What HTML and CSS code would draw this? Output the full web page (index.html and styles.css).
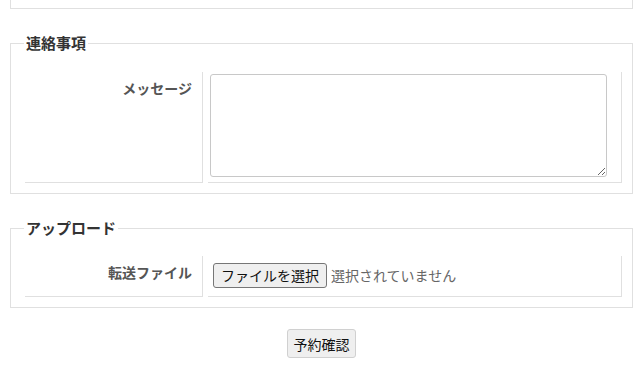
FILE: index.html
```html
<!DOCTYPE html>
<html lang="ja">
<head>
  <meta charset="UTF-8" />
  <meta name="viewport" content="width=device-width, initial-scale=1.0" />
  <title>予約フォーム</title>
  <link rel="stylesheet" href="styles.css">
</head>
<body>
  <form class="reserve-form">
    <fieldset class="box box-prev"></fieldset>

    <fieldset class="box">
      <legend>連絡事項</legend>
      <div class="row">
        <div class="label">メッセージ</div>
        <div class="value">
          <textarea name="message"></textarea>
        </div>
      </div>
    </fieldset>

    <fieldset class="box box-upload">
      <legend>アップロード</legend>
      <div class="row">
        <div class="label">転送ファイル</div>
        <div class="value value-file">
          <input type="file" id="upload" class="file-input">
          <label for="upload" class="file-btn">ファイルを選択</label>
          <span class="file-name">選択されていません</span>
        </div>
      </div>
    </fieldset>

    <div class="actions">
      <button type="submit" class="btn">予約確認</button>
    </div>
  </form>
</body>
</html>
```

FILE: styles.css
```css
* {
  box-sizing: border-box;
}

body {
  margin: 0 8px 8px;
  font-family: "Noto Sans CJK JP", "Noto Sans", sans-serif;
  color: #333;
  background: #fff;
}

.box {
  margin: 24px 2px 0;
  padding: 19px 10px 10px 14px;
  border: 1px solid #e0e0e0;
  min-width: 0;
}

.box-prev {
  margin-top: 0;
  height: 9px;
  padding: 0;
  border-top: none;
}

.box-upload {
  padding-top: 18px;
}

legend {
  padding: 0 2px;
  margin-left: -1px;
  font-size: 15px;
  line-height: 20px;
  font-weight: bold;
  color: #333;
}

.row {
  display: grid;
  grid-template-columns: 178px 1fr;
  column-gap: 5px;
}

.label {
  padding: 8px 10px 0 0;
  text-align: right;
  font-size: 14px;
  line-height: 16px;
  font-weight: bold;
  color: #555;
  border-right: 1px solid #e0e0e0;
  border-bottom: 1px solid #e0e0e0;
}

.value {
  padding: 2px 0 5px 2px;
  border-right: 1px solid #e0e0e0;
  border-bottom: 1px solid #e0e0e0;
}

textarea {
  display: block;
  width: 397px;
  height: 103px;
  margin: 0;
  border: 1px solid #c8c8c8;
  border-radius: 3px;
  font-family: inherit;
  font-size: 14px;
}

.value-file {
  display: flex;
  align-items: center;
  padding: 7px 0 8px 5px;
}

.file-input {
  display: none;
}

.file-btn {
  display: inline-block;
  width: 114px;
  height: 25px;
  padding: 0;
  text-align: center;
  font-size: 14px;
  line-height: 23px;
  color: #111;
  background: #efefef;
  border: 1px solid #767676;
  border-radius: 3px;
}

.file-name {
  margin-left: 4px;
  font-size: 14px;
  line-height: 23px;
  color: #666;
}

.actions {
  display: flex;
  justify-content: center;
  padding-top: 21px;
}

.btn {
  width: 69px;
  height: 29px;
  padding: 0;
  font-family: inherit;
  font-size: 14px;
  color: #111;
  background: #efefef;
  border: 1px solid #d0d0d0;
  border-radius: 3px;
}
```
